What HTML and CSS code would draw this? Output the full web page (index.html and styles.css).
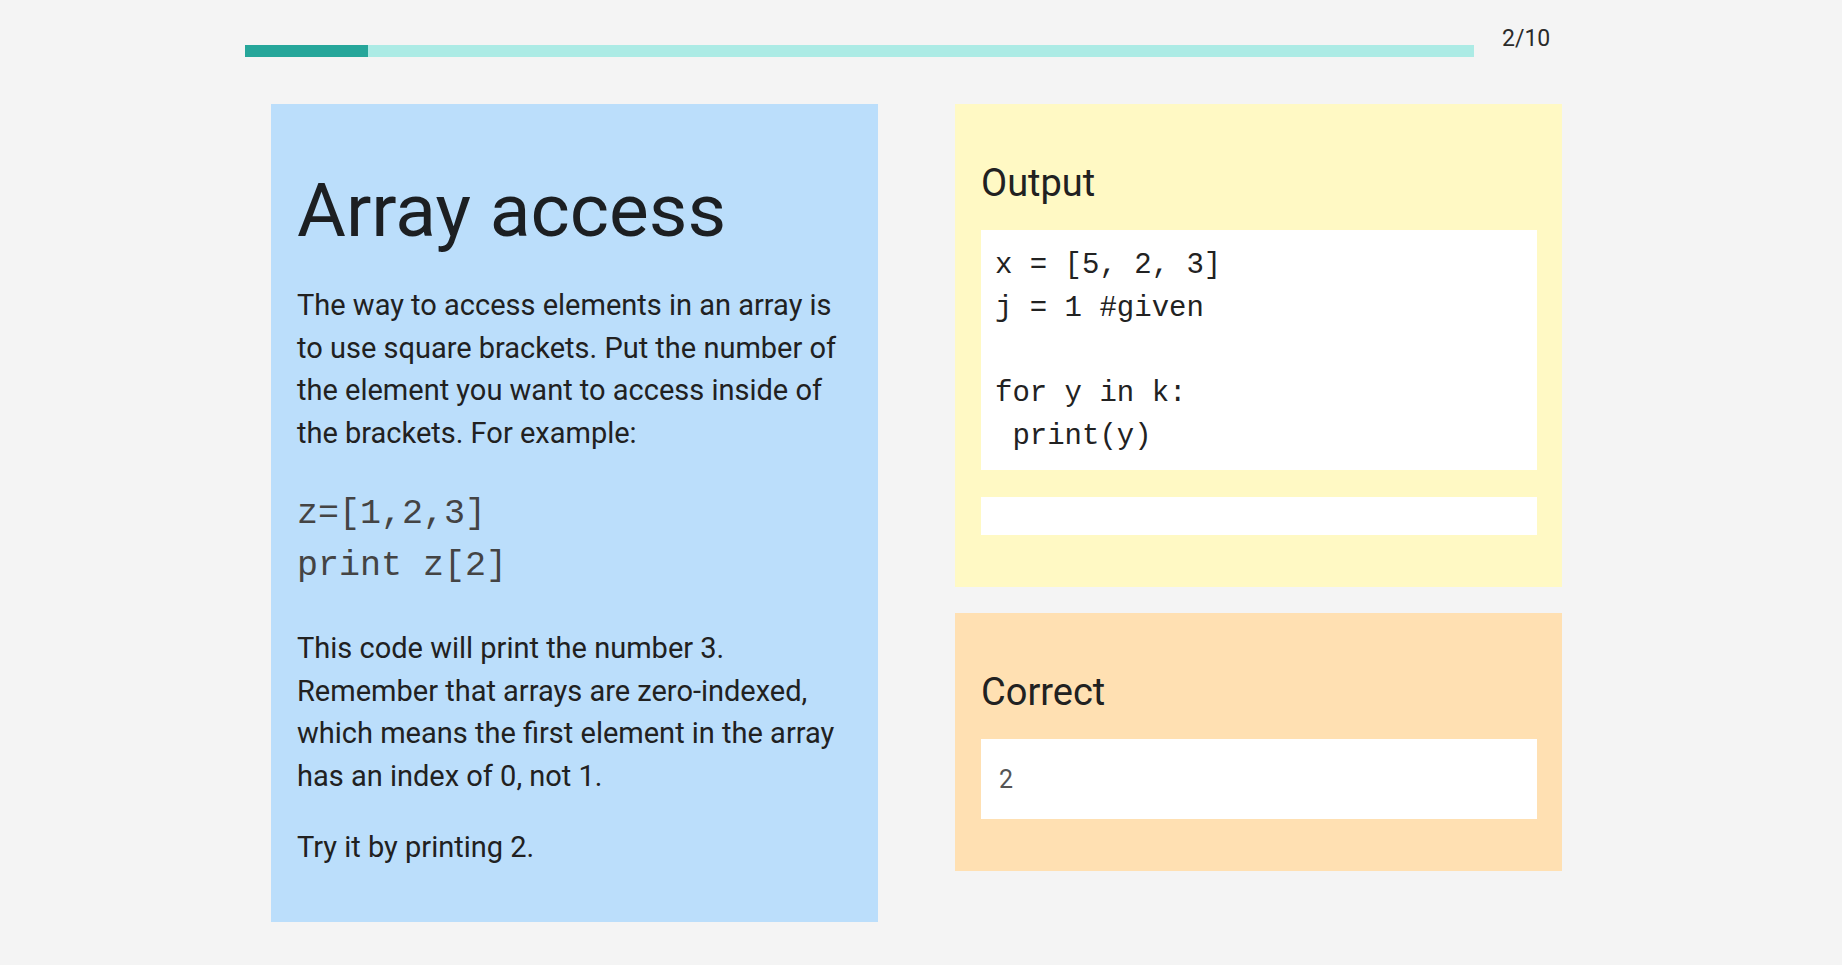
FILE: index.html
```html
<!DOCTYPE html>
<html lang="en">
<head>
<meta charset="utf-8">
<title>Array access</title>
<link rel="stylesheet" href="styles.css">
</head>
<body>
<div class="page">
  <header class="progress-row">
    <div class="progress-track">
      <div class="progress-fill" style="width: 10%"></div>
    </div>
    <div class="progress-count">2/10</div>
  </header>
  <main class="lesson">
    <section class="card card-info">
      <h1 class="lesson-title">Array access</h1>
      <p class="lesson-text">The way to access elements in an array is to use square brackets. Put the number of the element you want to access inside of the brackets. For example:</p>
      <pre class="lesson-code">z=[1,2,3]
print z[2]</pre>
      <p class="lesson-text">This code will print the number 3. Remember that arrays are zero-indexed, which means the first element in the array has an index of 0, not 1.</p>
      <p class="lesson-text lesson-last">Try it by printing 2.</p>
    </section>
    <div class="side">
      <section class="card card-output">
        <h2 class="card-title">Output</h2>
        <pre class="code-box">x = [5, 2, 3]
j = 1 #given

for y in k:
 print(y)</pre>
        <div class="answer-input"></div>
      </section>
      <section class="card card-correct">
        <h2 class="card-title">Correct</h2>
        <div class="result-box">2</div>
      </section>
    </div>
  </main>
</div>
</body>
</html>
```

FILE: styles.css
```css
html, body {
  margin: 0;
  padding: 0;
  background: #f4f4f4;
}

body {
  font-family: Roboto, "Liberation Sans", Arial, sans-serif;
  color: #212121;
}

.page {
  width: 1352px;
  margin: 0 auto;
  padding-top: 26px;
}

.progress-row {
  display: flex;
  align-items: flex-start;
}

.progress-track {
  width: 1229px;
  height: 12px;
  margin-top: 19px;
  background: #acebe5;
}

.progress-fill {
  height: 100%;
  background: #26a69a;
}

.progress-count {
  margin-left: 28px;
  font-size: 23px;
  line-height: 26px;
  color: #2a2a2a;
}

.lesson {
  display: flex;
  align-items: flex-start;
  gap: 77px;
  margin-top: 47px;
  margin-left: 26px;
}

.card {
  width: 607px;
  box-sizing: border-box;
}

.card-info {
  background: #bbdefb;
  padding: 62px 26px 53px 26px;
}

.lesson-title {
  margin: 0 0 30px 0;
  font-size: 75px;
  font-weight: 400;
  line-height: 88px;
  color: #1c1f22;
}

.lesson-text {
  margin: 0 0 29px 0;
  font-size: 29px;
  line-height: 42.5px;
  color: #212121;
}

.lesson-last {
  margin-bottom: 0;
}

.lesson-code {
  margin: 35px 0 35px 0;
  font-family: "Liberation Mono", "Courier New", monospace;
  font-size: 35px;
  line-height: 51.5px;
  color: #444;
  white-space: pre;
}

.side {
  display: flex;
  flex-direction: column;
  gap: 26px;
}

.card-output {
  background: #fff9c4;
  padding: 57px 25px 52px 26px;
}

.card-correct {
  background: #ffe0b2;
  padding: 57px 25px 52px 26px;
}

.card-title {
  margin: 0 0 24.5px 0;
  font-size: 38px;
  font-weight: 400;
  line-height: 44.5px;
  color: #212121;
}

.code-box {
  margin: 0;
  height: 240px;
  box-sizing: border-box;
  padding: 15px 14px 11px 14px;
  background: #ffffff;
  font-family: "Liberation Mono", "Courier New", monospace;
  font-size: 29px;
  line-height: 42.75px;
  color: #222;
  white-space: pre;
}

.answer-input {
  margin-top: 27px;
  height: 38px;
  background: #ffffff;
}

.result-box {
  height: 80px;
  box-sizing: border-box;
  padding-left: 18px;
  display: flex;
  align-items: center;
  background: #ffffff;
  font-size: 25px;
  color: #555;
}
```
